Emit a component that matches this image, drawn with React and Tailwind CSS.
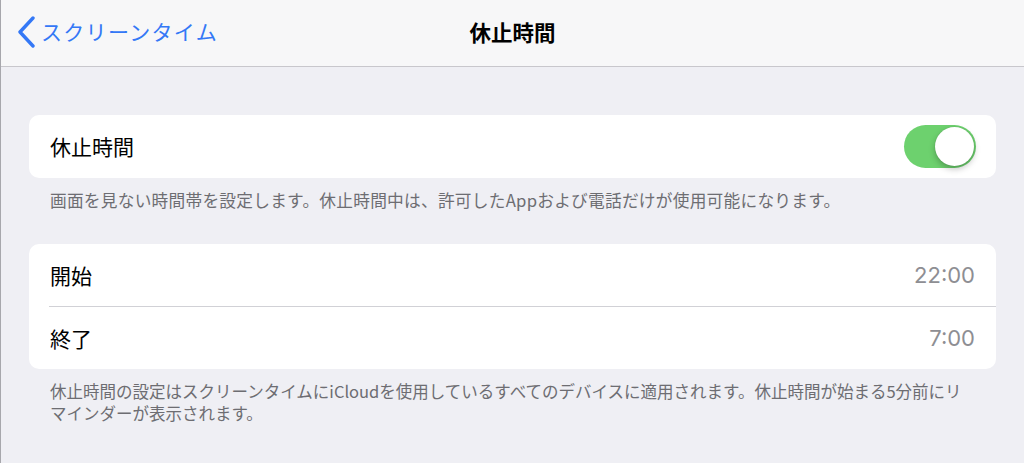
export default function App() {
  const font = { fontFamily: '"Noto Sans CJK JP", "Noto Sans", sans-serif' };
  const latin = { fontFamily: 'Inter, "Noto Sans CJK JP", sans-serif' };
  return (
    <div
      style={font}
      className="w-[1024px] h-[463px] overflow-hidden bg-[#efeff4] border-l border-[#a7a7ac] flex flex-col"
    >
      {/* navigation bar */}
      <header className="h-[67px] shrink-0 bg-[#f7f7f8] border-b border-[#c8c7cc] grid grid-cols-[1fr_auto_1fr] items-center pb-[3px]">
        <div className="flex items-center pl-[16px] text-[#3478f6]">
          <svg width="20" height="32" viewBox="0 0 20 32">
            <path
              d="M16 2 L3 16 L16 30"
              fill="none"
              stroke="currentColor"
              strokeWidth="3.4"
              strokeLinecap="round"
              strokeLinejoin="round"
            />
          </svg>
          <span className="ml-[4px] text-[21px] leading-none tracking-[1.3px]">スクリーンタイム</span>
        </div>
        <h1 className="text-[21.5px] font-semibold text-black leading-none">休止時間</h1>
        <div />
      </header>

      <main className="px-[28px]">
        {/* downtime switch */}
        <div className="mt-[48px] h-[63px] rounded-[10px] bg-white flex items-center justify-between pl-[21px] pr-[20px]">
          <span className="text-[21px] text-black leading-none">休止時間</span>
          <div className="w-[72px] h-[43px] rounded-full bg-[#6dd16e] p-[2px] flex justify-end">
            <div className="w-[39px] h-[39px] rounded-full bg-white shadow-[0_3px_6px_rgba(0,0,0,0.25),0_0_1px_rgba(0,0,0,0.2)]" />
          </div>
        </div>
        <p className="mt-[11px] pl-[21px] text-[16.7px] leading-[22px] text-[#6d6d72] tracking-[0.25px]">
          画面を見ない時間帯を設定します。休止時間中は、許可したAppおよび電話だけが使用可能になります。
        </p>

        {/* schedule */}
        <div className="mt-[33px] rounded-[10px] bg-white">
          <div className="h-[62px] flex items-center justify-between pl-[21px] pr-[21px]">
            <span className="text-[21px] text-black leading-none">開始</span>
            <span style={latin} className="text-[22px] text-[#8e8e93] leading-none">22:00</span>
          </div>
          <div className="ml-[20px] h-px bg-[#d1d1d6]" />
          <div className="h-[62px] flex items-center justify-between pl-[21px] pr-[21px]">
            <span className="text-[21px] text-black leading-none">終了</span>
            <span style={latin} className="text-[22px] text-[#8e8e93] leading-none">7:00</span>
          </div>
        </div>
        <p className="mt-[11px] pl-[21px] pr-[10px] text-[16.5px] leading-[22px] text-[#6d6d72]">
          休止時間の設定はスクリーンタイムにiCloudを使用しているすべてのデバイスに適用されます。休止時間が始まる5分前にリ
          <br />
          マインダーが表示されます。
        </p>
      </main>
    </div>
  );
}
